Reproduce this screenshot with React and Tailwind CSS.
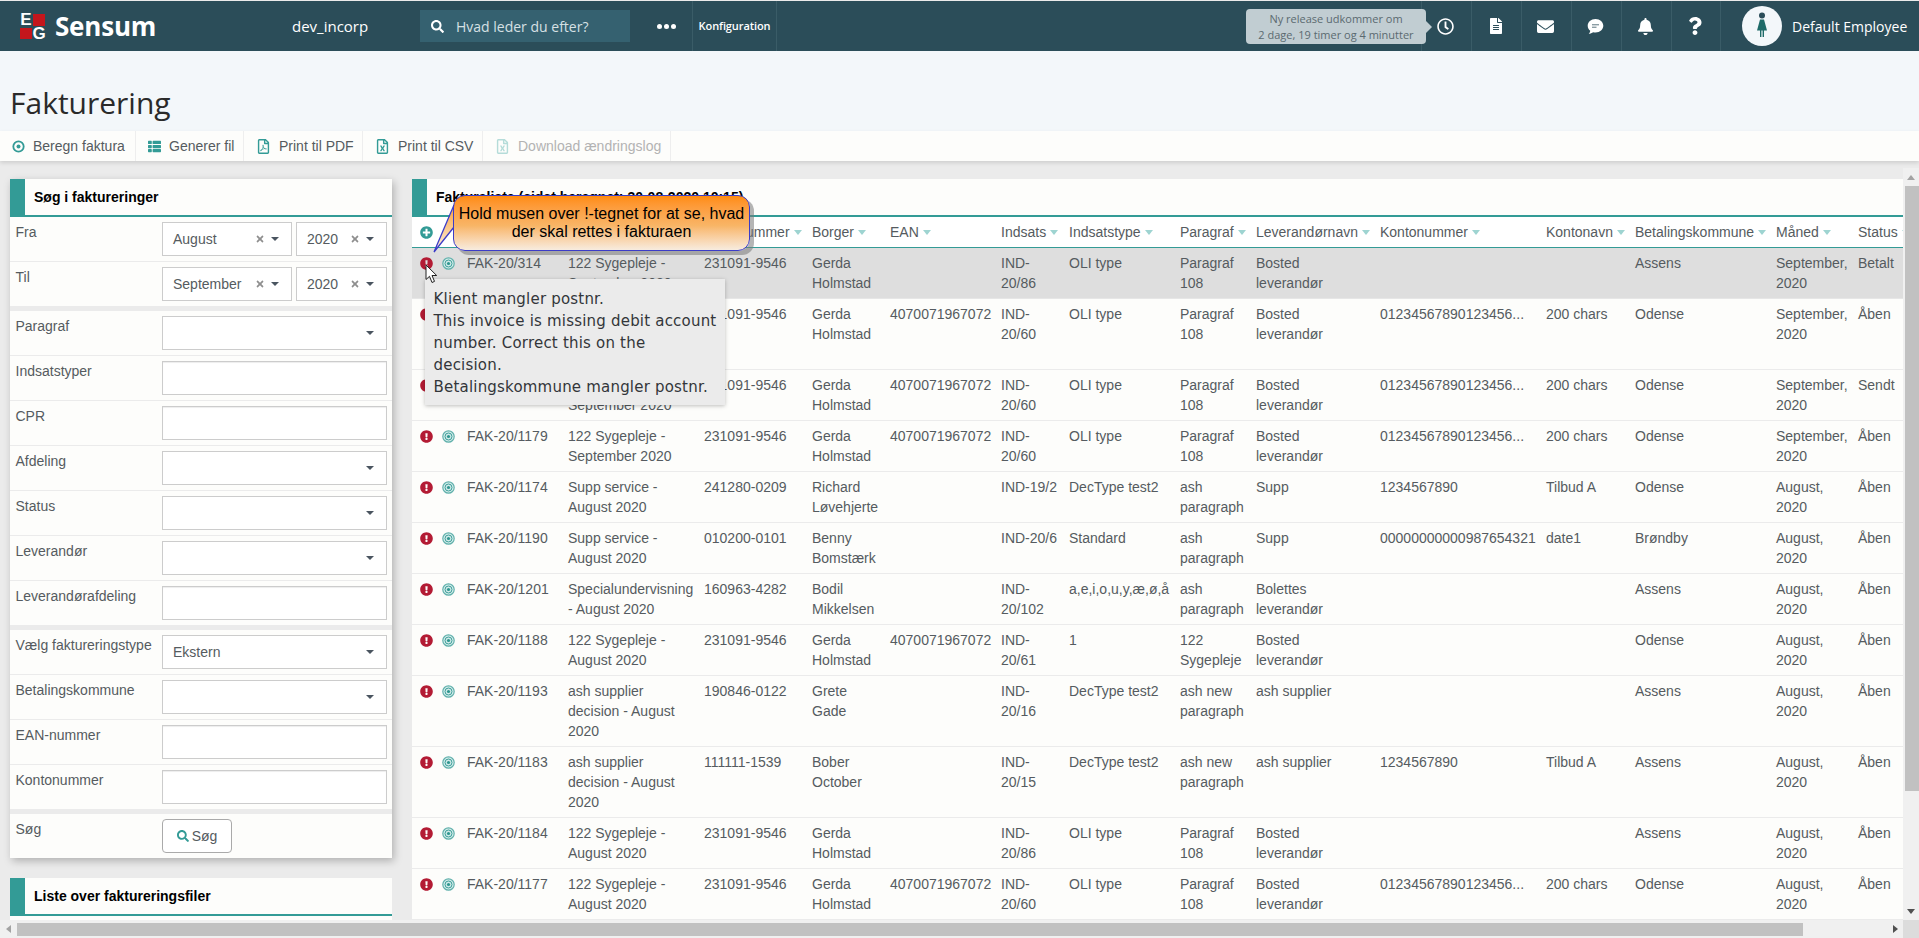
import React from "react";
import { FaSearch, FaRegClock, FaFileAlt, FaEnvelope, FaBell, FaQuestion, FaThList, FaRegFilePdf, FaRegFileExcel, FaTimes, FaPlusCircle, FaExclamationCircle } from "react-icons/fa";

const Caret = ({ c = "border-t-[#9ed4d1]" }) => (
  <span className={`inline-block w-0 h-0 ml-[4px] align-middle border-x-[4.5px] border-x-transparent border-t-[5px] ${c}`} />
);
const DarkCaret = () => <span className="inline-block w-0 h-0 border-x-[4px] border-x-transparent border-t-[4.5px] border-t-[#4a5560]" />;

const Target = () => (
  <svg width="13" height="13" viewBox="0 0 13 13" className="block">
    <circle cx="6.5" cy="6.5" r="5.7" fill="#d5edeb" stroke="#62b1ac" strokeWidth="1.2" />
    <circle cx="6.5" cy="6.5" r="3.5" fill="#cfeae8" stroke="#3d9f9a" strokeWidth="1" />
    <circle cx="6.5" cy="6.5" r="1.6" fill="#2f958f" />
  </svg>
);

const Logo = () => (
  <div className="grid grid-cols-[12px_12px] grid-rows-[12px_11px] gap-x-[1px] gap-y-[2px] w-[25px] h-[25px] text-white font-bold leading-none text-[17px] font-['Liberation_Sans',sans-serif]">
    <span className="flex items-center justify-center">E</span>
    <span className="bg-[#c4161c]" />
    <span className="bg-[#c4161c]" />
    <span className="flex items-center justify-center">G</span>
  </div>
);

const HeaderIcon = ({ children }) => (
  <div className="w-[50px] h-full flex items-center justify-center pr-[2px] border-l border-[#3a5c67] text-white">{children}</div>
);

const ToolItem = ({ icon, label, muted, w }) => (
  <div className={`h-full flex items-center border-r border-[#eeeeee] gap-[8px] pl-[12px] ${w} ${muted ? "text-[#b3b3b3]" : "text-[#555b60]"}`}>
    {icon}
    <span>{label}</span>
  </div>
);

const Row = ({ label, children, last }) => (
  <div className={`flex pt-[5px] ${last ? "h-[44px]" : "h-[45px] border-b border-[#ebebeb]"}`}>
    <div className="w-[152px] pl-[5.5px] shrink-0 leading-[20px] text-[#555b60] whitespace-nowrap">{label}</div>
    {children}
  </div>
);

const Box = ({ children, w = "w-[225px]" }) => (
  <div className={`h-[34px] border border-[#cccccc] bg-white flex items-center pl-[10px] text-[#555b60] ${w}`}>{children}</div>
);
const TextInput = () => <div className="h-[34px] w-[225px] border border-[#cccccc] bg-white shadow-[inset_0_1px_1px_rgba(0,0,0,0.075)]" />;
const Select = ({ value }) => (
  <Box>
    <span className="flex-1">{value}</span>
    <span className="mr-[12px] flex"><DarkCaret /></span>
  </Box>
);
const ClearSelect = ({ value, w }) => (
  <Box w={w}>
    <span className="flex-1">{value}</span>
    <FaTimes className="text-[#8f8f8f] text-[10px]" />
    <span className="ml-[6px] mr-[12px] flex"><DarkCaret /></span>
  </Box>
);

const PanelHead = ({ title }) => (
  <div className="flex h-[38px] bg-[#fdfdfb] border-b-2 border-[#339b96]">
    <div className="w-[15px] bg-[#339b96] shrink-0" />
    <div className="pl-[9px] pt-[8px] leading-[20px] font-bold text-black whitespace-nowrap">{title}</div>
  </div>
);

const Group = ({ children, sep }) => <div className={sep ? "border-b-[5px] border-[#ebebeb]" : ""}>{children}</div>;

const widths = [25, 25, 101, 136, 108, 78, 111, 68, 111, 76, 124, 166, 89, 141, 82, 87];
const heads = ["Fakturanr.", "Tekst", "CPR-nummer", "Borger", "EAN", "Indsats", "Indsatstype", "Paragraf", "Leverandørnavn", "Kontonummer", "Kontonavn", "Betalingskommune", "Måned", "Status"];

const G = ["231091-9546", "Gerda Holmstad"];
const EAN = "4070071967072";
const K = "01234567890123456...";
const P108 = ["OLI type", "Paragraf 108", "Bosted leverandør"];
const rows = [
  ["FAK-20/314", "122 Sygepleje - September 2020", ...G, "", "IND-20/86", ...P108, "", "", "Assens", "September, 2020", "Betalt"],
  ["FAK-20/1181", "122 Sygepleje - September 2020", ...G, EAN, "IND-20/60", ...P108, K, "200 chars", "Odense", "September, 2020", "Åben", true],
  ["FAK-20/1180", "122 Sygepleje - September 2020", ...G, EAN, "IND-20/60", ...P108, K, "200 chars", "Odense", "September, 2020", "Sendt"],
  ["FAK-20/1179", "122 Sygepleje - September 2020", ...G, EAN, "IND-20/60", ...P108, K, "200 chars", "Odense", "September, 2020", "Åben"],
  ["FAK-20/1174", "Supp service - August 2020", "241280-0209", "Richard Løvehjerte", "", "IND-19/2", "DecType test2", "ash paragraph", "Supp", "1234567890", "Tilbud A", "Odense", "August, 2020", "Åben"],
  ["FAK-20/1190", "Supp service - August 2020", "010200-0101", "Benny Bomstærk", "", "IND-20/6", "Standard", "ash paragraph", "Supp", "00000000000987654321", "date1", "Brøndby", "August, 2020", "Åben"],
  ["FAK-20/1201", "Specialundervisning - August 2020", "160963-4282", "Bodil Mikkelsen", "", "IND-20/102", "a,e,i,o,u,y,æ,ø,å", "ash paragraph", "Bolettes leverandør", "", "", "Assens", "August, 2020", "Åben"],
  ["FAK-20/1188", "122 Sygepleje - August 2020", ...G, EAN, "IND-20/61", "1", "122 Sygepleje", "Bosted leverandør", "", "", "Odense", "August, 2020", "Åben"],
  ["FAK-20/1193", "ash supplier decision - August 2020", "190846-0122", "Grete Gade", "", "IND-20/16", "DecType test2", "ash new paragraph", "ash supplier", "", "", "Assens", "August, 2020", "Åben"],
  ["FAK-20/1183", "ash supplier decision - August 2020", "111111-1539", "Bober October", "", "IND-20/15", "DecType test2", "ash new paragraph", "ash supplier", "1234567890", "Tilbud A", "Assens", "August, 2020", "Åben"],
  ["FAK-20/1184", "122 Sygepleje - August 2020", ...G, "", "IND-20/86", ...P108, "", "", "Assens", "August, 2020", "Åben"],
  ["FAK-20/1177", "122 Sygepleje - August 2020", ...G, EAN, "IND-20/60", ...P108, K, "200 chars", "Odense", "August, 2020", "Åben"],
];

export default function App() {
  return (
    <div className="relative w-[1919px] h-[938px] overflow-hidden flex flex-col bg-[#ebebeb] text-[14px] text-[#555b60] font-['Liberation_Sans',Arial,sans-serif]">
      {/* top bar */}
      <header className="h-[50px] mt-[1px] shrink-0 bg-[#2b4d59] flex items-center text-white font-['Open_Sans',sans-serif]">
        <div className="ml-[20px]"><Logo /></div>
        <div className="ml-[10px] w-[237px] text-[26px] font-bold leading-none tracking-[-0.2px] -mt-[1px]">Sensum</div>
        <div className="w-[128px] text-[15px]">dev_incorp</div>
        <div className="w-[210px] h-[32px] bg-[#356170] flex items-center pl-[11px] gap-[12px] text-[#d6e0e4]">
          <FaSearch className="text-white text-[13px]" />
          <span className="text-[14px]">Hvad leder du efter?</span>
        </div>
        <div className="w-[62px] flex justify-center gap-[2px] pl-[10px]">
          <span className="w-[5px] h-[5px] rounded-full bg-white" />
          <span className="w-[5px] h-[5px] rounded-full bg-white" />
          <span className="w-[5px] h-[5px] rounded-full bg-white" />
        </div>
        <div className="w-[85px] h-full border-x border-[#3a5c67] flex items-center justify-center text-[11px] tracking-[-0.1px] font-semibold">Konfiguration</div>
        <div className="flex-1" />
        <div className="relative w-[180px] h-[35px] mt-[1px] mr-[-5px] z-10 rounded-[4px] bg-[#c1cdd2] text-[#5b6a70] text-[11px] leading-[16px] text-center pt-[2px]">
          <div>Ny release udkommer om</div>
          <div>2 dage, 19 timer og 4 minutter</div>
          <span className="absolute left-full top-[12px] w-0 h-0 border-y-[6px] border-y-transparent border-l-[6px] border-l-[#c1cdd2]" />
        </div>
        <HeaderIcon><FaRegClock className="text-[17px]" /></HeaderIcon>
        <HeaderIcon><FaFileAlt className="text-[16px]" /></HeaderIcon>
        <HeaderIcon><FaEnvelope className="text-[17px]" /></HeaderIcon>
        <HeaderIcon>
          <svg width="17" height="17" viewBox="0 0 17 17">
            <path d="M8.5 1C4 1 .7 4 .7 7.8c0 2 .9 3.7 2.5 5-.1 1.200-.7 2.300-1.500 3 1.800-.1 3.300-.7 4.500-1.600.7.200 1.500.3 2.300.3 4.500 0 7.800-3 7.800-6.700S13 1 8.500 1z" fill="#fff" />
            <rect x="5" y="6" width="7" height="1.400" fill="#2b4d59" opacity=".55" />
            <rect x="5" y="8.600" width="4.500" height="1.400" fill="#2b4d59" opacity=".55" />
          </svg>
        </HeaderIcon>
        <HeaderIcon><FaBell className="text-[17px]" /></HeaderIcon>
        <div className="w-[50px] h-full flex items-center justify-center pr-[2px] border-x border-[#3a5c67] text-white"><FaQuestion className="text-[18px]" /></div>
        <div className="ml-[21px] w-[40px] h-[40px] rounded-full bg-[#f3f7fa] flex items-center justify-center">
          <svg width="12" height="28" viewBox="0 0 12 28">
            <circle cx="6" cy="3.500" r="3" fill="#2b4d59" />
            <path d="M4 7.500h4l3 11H8v6.500H6.600v-6.500H5.400V25H4v-6.500H1z" fill="#1f6b69" />
          </svg>
        </div>
        <div className="ml-[10px] w-[127px] whitespace-nowrap text-[14px]">Default Employee</div>
      </header>

      {/* title */}
      <div className="h-[80px] shrink-0 bg-[#f3f7fa] flex items-end pb-[8px] pl-[10px] text-[30px] leading-[40px] text-[#2a2a2a] font-['Open_Sans',sans-serif]">Fakturering</div>

      {/* toolbar */}
      <div className="h-[30px] shrink-0 bg-[#fdfdfb] flex shadow-[0_2px_4px_rgba(0,0,0,0.12)] relative">
        <ToolItem w="w-[136px]" label="Beregn faktura" icon={
          <svg width="13" height="13" viewBox="0 0 13 13"><circle cx="6.500" cy="6.500" r="5.200" fill="none" stroke="#339b96" strokeWidth="1.800" /><circle cx="6.500" cy="6.500" r="2" fill="#339b96" /></svg>
        } />
        <ToolItem w="w-[108px]" label="Generer fil" icon={<FaThList className="text-[#339b96] text-[13px]" />} />
        <ToolItem w="w-[119px]" label="Print til PDF" icon={<FaRegFilePdf className="text-[#339b96] text-[15px]" />} />
        <ToolItem w="w-[120px]" label="Print til CSV" icon={<FaRegFileExcel className="text-[#339b96] text-[15px]" />} />
        <ToolItem w="w-[188px]" muted label="Download ændringslog" icon={<FaRegFileExcel className="text-[#b5dcd9] text-[15px]" />} />
      </div>

      <div className="h-[7px] shrink-0" />

      {/* scrolling region */}
      <div className="flex-1 min-h-0 grid grid-cols-[1903px_16px] grid-rows-[752px_18px]">
        <div className="flex pt-[11px] overflow-hidden">
          <aside className="w-[382px] ml-[10px] shrink-0">
            <div className="bg-[#fdfdfb] shadow-[2px_3px_8px_rgba(0,0,0,0.25)]">
              <PanelHead title="Søg i faktureringer" />
              <Group sep>
                <Row label="Fra">
                  <div className="flex gap-[4px]">
                    <ClearSelect value="August" w="w-[130px]" />
                    <ClearSelect value="2020" w="w-[91px]" />
                  </div>
                </Row>
                <Row label="Til" last>
                  <div className="flex gap-[4px]">
                    <ClearSelect value="September" w="w-[130px]" />
                    <ClearSelect value="2020" w="w-[91px]" />
                  </div>
                </Row>
              </Group>
              <Group sep>
                <Row label="Paragraf"><Select /></Row>
                <Row label="Indsatstyper"><TextInput /></Row>
                <Row label="CPR"><TextInput /></Row>
                <Row label="Afdeling"><Select /></Row>
                <Row label="Status"><Select /></Row>
                <Row label="Leverandør"><Select /></Row>
                <Row label="Leverandørafdeling" last><TextInput /></Row>
              </Group>
              <Group sep>
                <Row label="Vælg faktureringstype"><Select value="Ekstern" /></Row>
                <Row label="Betalingskommune"><Select /></Row>
                <Row label="EAN-nummer"><TextInput /></Row>
                <Row label="Kontonummer" last><TextInput /></Row>
              </Group>
              <div className="flex pt-[5px] h-[44px]">
                <div className="w-[152px] pl-[5.500px] leading-[20px]">Søg</div>
                <div className="w-[70px] h-[34px] rounded-[4px] border border-[#aaaaaa] bg-white flex items-center justify-center gap-[3px]">
                  <FaSearch className="text-[#339b96] text-[12px]" />
                  <span>Søg</span>
                </div>
              </div>
            </div>
            <div className="mt-[20px]">
              <PanelHead title="Liste over faktureringsfiler" />
              <div className="h-[8px] bg-[#fdfdfb]" />
            </div>
          </aside>

          <section className="ml-[20px] w-[1491px] shrink-0 overflow-hidden bg-[#fdfdfb]">
            <PanelHead title="Fakturaliste (sidst beregnet: 30-08-2020 10:15)" />
            <table className="table-fixed border-separate border-spacing-0 w-[1528px]">
              <colgroup>
                {widths.map((w, i) => <col key={i} style={{ width: w }} />)}
              </colgroup>
              <thead>
                <tr className="bg-white">
                  <th colSpan={2} className="h-[31px] p-0 pl-[8px] border-b border-[#339b96] font-normal text-left">
                    <FaPlusCircle className="text-[#339b96] text-[13px]" />
                  </th>
                  {heads.map((h) => (
                    <th key={h} className="h-[31px] p-0 pl-[5px] border-b border-[#339b96] font-normal text-left whitespace-nowrap text-[#555b60]">
                      {h}<Caret />
                    </th>
                  ))}
                </tr>
              </thead>
              <tbody>
                {rows.map((r, i) => {
                  const cells = r.slice(0, 14);
                  const tall = r[14];
                  const cell = `align-top border-b pt-[5px] pb-[5px] leading-[20px] ${i === 0 ? "bg-[#dedede] border-[#e6e6e6]" : "border-[#ebebeb]"}`;
                  return (
                    <tr key={i} className={tall ? "h-[71px]" : ""}>
                      <td className={`${cell} pl-[7.500px] pr-0`}>
                        <FaExclamationCircle className="text-[#b31b34] text-[13px] mt-[4px]" />
                      </td>
                      <td className={`${cell} pl-[5px] pr-0`}>
                        <div className="mt-[4px]"><Target /></div>
                      </td>
                      {cells.map((c, j) => (
                        <td key={j} className={`${cell} pl-[5px] pr-[5px] ${j === 9 || j === 13 ? "whitespace-nowrap" : ""}`}>{c}</td>
                      ))}
                    </tr>
                  );
                })}
              </tbody>
            </table>
          </section>
        </div>

        {/* vertical scrollbar */}
        <div className="bg-[#f0f0f0] flex flex-col items-end">
          <div className="h-[18px] w-full flex items-center justify-center">
            <span className="w-0 h-0 border-x-[4px] border-x-transparent border-b-[5px] border-b-[#a3a3a3]" />
          </div>
          <div className="w-[14px] h-[605px] bg-[#c1c1c1]" />
          <div className="flex-1" />
          <div className="h-[18px] w-full flex items-center justify-center">
            <span className="w-0 h-0 border-x-[4px] border-x-transparent border-t-[5px] border-t-[#505050]" />
          </div>
        </div>

        {/* horizontal scrollbar */}
        <div className="bg-[#f0f0f0] flex items-center">
          <div className="w-[17px] flex justify-center">
            <span className="w-0 h-0 border-y-[4px] border-y-transparent border-r-[5px] border-r-[#a3a3a3]" />
          </div>
          <div className="w-[1786px] h-[13px] bg-[#c1c1c1]" />
          <div className="flex-1 flex justify-end pr-[5px]">
            <span className="w-0 h-0 border-y-[4px] border-y-transparent border-l-[5px] border-l-[#505050]" />
          </div>
        </div>
        <div className="bg-[#dcdcdc]" />
      </div>

      {/* tooltip over the table */}
      <div className="absolute left-[425px] top-[279px] w-[300px] h-[126px] bg-[#ebebeb] shadow-[0_1px_4px_rgba(0,0,0,0.25)] pt-[9px] pl-[8.500px] text-[15px] tracking-[0.2px] leading-[22px] text-[#33363a] whitespace-nowrap font-['DejaVu_Sans',sans-serif]">
        Klient mangler postnr.<br />
        This invoice is missing debit account<br />
        number. Correct this on the<br />
        decision.<br />
        Betalingskommune mangler postnr.
      </div>

      {/* callout */}
      <svg className="absolute left-[430px] top-[195px]" width="26" height="60" viewBox="0 0 26 60">
        <defs>
          <linearGradient id="tail" x1="0" y1="0" x2="0" y2="1">
            <stop offset="0" stopColor="#fb9f35" />
            <stop offset="1" stopColor="#fbf4ea" />
          </linearGradient>
        </defs>
        <path d="M24.500 10 L4 57 L24.500 32 Z" fill="url(#tail)" />
        <path d="M24 10 L4 57 L24 32" fill="none" stroke="#3c3cc8" strokeWidth="1.300" />
      </svg>
      <div className="absolute left-[453px] top-[195px] w-[297px] h-[56px] rounded-[12px] border-[1.500px] border-[#3c3cc8] bg-gradient-to-b from-[#ff8c0a] via-[#f8b566] via-55% to-[#f7ecdf] shadow-[4px_4px_0_rgba(120,120,120,0.55)] text-black text-center text-[16px] leading-[18.500px] pt-[8.500px]">
        Hold musen over !-tegnet for at se, hvad<br />der skal rettes i fakturaen
      </div>

      {/* mouse pointer */}
      <svg className="absolute left-[425px] top-[264px]" width="13" height="20" viewBox="0 0 13 20">
        <path d="M1 1 V15.500 L4.500 12.300 L7 18.500 L9.500 17.400 L7 11.500 H11.700 Z" fill="#fff" stroke="#222" strokeWidth="1" />
      </svg>
    </div>
  );
}
